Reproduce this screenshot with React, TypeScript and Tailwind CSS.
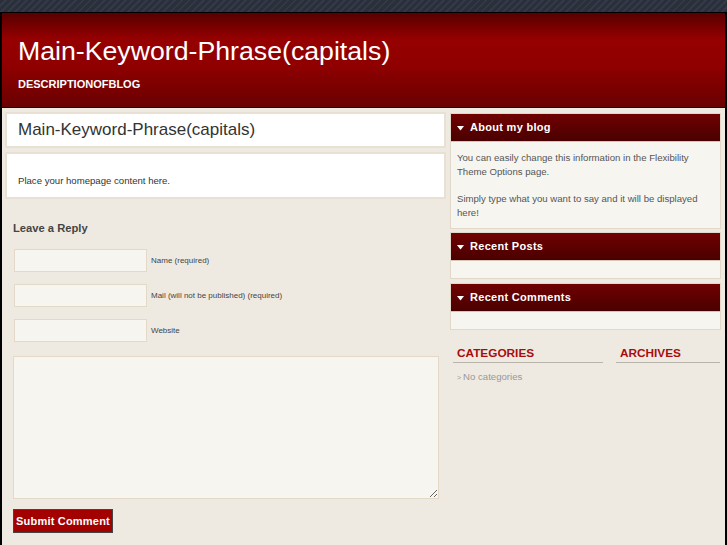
import type { ReactNode } from "react";

const font = "font-['Liberation_Sans',Arial,sans-serif]";

function Widget({ title, className = "", children }: { title: string; className?: string; children?: ReactNode }) {
  return (
    <div className={`border border-[#e2d8c9] ${className}`}>
      <div className="flex items-center gap-[6px] h-[28px] pl-[6px] bg-[linear-gradient(to_bottom,#700000,#4a0000)] border-b border-[#d9c7b6]">
        <svg width="7" height="5" viewBox="0 0 7 5" className="mt-[1px]">
          <path d="M0 0h7L3.5 4.5z" fill="#fff" />
        </svg>
        <span className="text-[11px] font-bold text-white tracking-[0.3px]">{title}</span>
      </div>
      <div className="bg-[#f7f5f0] min-h-[17px]">{children}</div>
    </div>
  );
}

function Field({ label }: { label: string }) {
  return (
    <div className="flex items-center gap-[4px]">
      <input className="w-[133px] h-[23px] bg-[#f7f5f0] border border-[#e3d9c6] outline-none" />
      <span className="text-[8px] text-[#444]">{label}</span>
    </div>
  );
}

export default function App() {
  return (
    <div
      className={`${font} min-h-[545px] pt-[12px] bg-[repeating-linear-gradient(135deg,#2a2f3a_0px,#2a2f3a_3px,#333947_3px,#333947_5px)]`}
    >
      <div className="border-t border-x-2 border-black bg-[#eeeae2] min-h-[533px]">
        <header className="h-[95px] border-b border-black bg-[linear-gradient(to_bottom,#580000_0%,#960000_28%,#900000_55%,#6a0000_100%)] pl-[16px] pt-[22px]">
          <h1 className="text-[26.7px] leading-[32px] text-white">Main-Keyword-Phrase(capitals)</h1>
          <p className="mt-[10px] text-[11px] font-bold text-white leading-[14px]">DESCRIPTIONOFBLOG</p>
        </header>

        <div className="flex gap-[4px] pl-[3px] pr-[4px] pt-[4px]">
          <main className="w-[441px] flex flex-col">
            <div className="h-[36px] border-2 border-[#e8e0d3] bg-white flex items-center pl-[11px]">
              <h2 className="text-[17px] text-[#333]">Main-Keyword-Phrase(capitals)</h2>
            </div>
            <div className="mt-[4px] h-[47px] border-2 border-[#e8e0d3] bg-white pl-[11px] pt-[21px]">
              <p className="text-[9.6px] text-[#333] leading-[12px]">Place your homepage content here.</p>
            </div>

            <h3 className="mt-[22px] pl-[8px] text-[11.2px] font-bold text-[#444] leading-[14px]">Leave a Reply</h3>

            <div className="mt-[14px] pl-[9px] flex flex-col gap-[12px]">
              <Field label="Name (required)" />
              <Field label="Mail (will not be published) (required)" />
              <Field label="Website" />
            </div>

            <textarea className="mt-[14px] ml-[8px] w-[426px] h-[143px] bg-[#f7f5f0] border border-[#e3d9c6] outline-none" />

            <div className="mt-[9px] pl-[8px]">
              <button className="h-[24px] w-[100px] bg-[#a30000] border border-[#444] text-white text-[11px] font-bold tracking-[0.2px]">
                Submit Comment
              </button>
            </div>
          </main>

          <aside className="w-[271px] flex flex-col gap-[3px] pt-[1px]">
            <Widget title="About my blog">
              <div className="px-[6px] pt-[9px] pb-[8px] text-[9.6px] leading-[14px] text-[#555]">
                <p>You can easily change this information in the Flexibility Theme Options page.</p>
                <p className="mt-[13px]">Simply type what you want to say and it will be displayed here!</p>
              </div>
            </Widget>
            <Widget title="Recent Posts" />
            <Widget title="Recent Comments" className="mt-[1px]" />

            <div className="mt-[13px] flex pl-[3px] gap-[13px]">
              <div className="w-[150px]">
                <h4 className="pl-[4px] text-[11.8px] font-bold text-[#a80d0d] leading-[14px] pb-[2px] border-b border-[#b8b3ab]">CATEGORIES</h4>
                <p className="mt-[8px] pl-[4px] text-[9.6px] text-[#999] leading-[12px]">
                  <span className="text-[7px] mr-[2px]">&gt;</span>No categories
                </p>
              </div>
              <div className="w-[104px]">
                <h4 className="pl-[4px] text-[11.8px] font-bold text-[#a80d0d] leading-[14px] pb-[2px] border-b border-[#b8b3ab]">ARCHIVES</h4>
              </div>
            </div>
          </aside>
        </div>
      </div>
    </div>
  );
}
